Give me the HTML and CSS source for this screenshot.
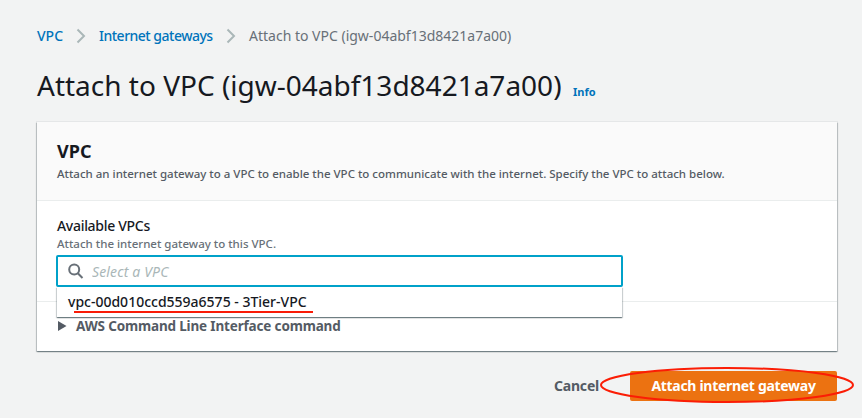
FILE: index.html
```html
<!DOCTYPE html>
<html lang="en">
<head>
  <meta charset="UTF-8">
  <meta name="viewport" content="width=device-width, initial-scale=1.0">
  <title>Attach to VPC</title>
  <link rel="stylesheet" href="styles.css">
</head>
<body>

  <nav class="breadcrumb">
    <a href="#" class="crumb-vpc">VPC</a>
    <svg class="chevron" width="10" height="16" viewBox="0 0 10 16"><path d="M1.5 1.5L8 8l-6.5 6.5"/></svg>
    <a href="#" class="crumb-gateways">Internet gateways</a>
    <svg class="chevron" width="10" height="16" viewBox="0 0 10 16"><path d="M1.5 1.5L8 8l-6.5 6.5"/></svg>
    <span class="crumb-current">Attach to VPC (igw-04abf13d8421a7a00)</span>
  </nav>

  <div class="page-title">
    <h1>Attach to VPC (igw-04abf13d8421a7a00)</h1>
    <a href="#" class="info">Info</a>
  </div>

  <div class="card">
    <div class="card-header">
      <h2>VPC</h2>
      <p>Attach an internet gateway to a VPC to enable the VPC to communicate with the internet. Specify the VPC to attach below.</p>
    </div>

    <div class="card-body">
      <label for="vpc">Available VPCs</label>
      <p class="hint">Attach the internet gateway to this VPC.</p>
      <div class="select">
        <div class="search-box">
          <svg class="search-icon" width="16" height="16" viewBox="0 0 16 16"><circle cx="6.2" cy="6.5" r="5"/><path d="M9.8 10.2L14.5 15"/></svg>
          <input type="text" id="vpc" placeholder="Select a VPC">
        </div>
        <div class="dropdown">
          <span class="option">vpc-00d010ccd559a6575 - 3Tier-VPC</span>
          <span class="underline"></span>
        </div>
      </div>
    </div>

    <div class="cli">
      <svg width="9" height="10" viewBox="0 0 9 10"><path d="M0 0l8.5 5L0 10z"/></svg>
      <span class="cli-text">AWS Command Line Interface command</span>
    </div>
  </div>

  <div class="actions">
    <button type="button" class="cancel-btn">Cancel</button>
    <button type="submit" class="attach-btn">
      <span class="attach-text">Attach internet gateway</span>
      <svg class="highlight" width="258" height="38" viewBox="0 0 258 38"><ellipse cx="129" cy="19" rx="126" ry="17"/></svg>
    </button>
  </div>

</body>
</html>
```
FILE: styles.css
```css
* {
  box-sizing: border-box;
}

body {
  font-family: "Noto Sans", "Open Sans", sans-serif;
  font-size: 14px;
  background: #f2f3f3;
  color: #16191f;
  margin: 0;
  padding: 24px 25px 0 37px;
  height: 418px;
  overflow: hidden;
}

h1, h2, p {
  margin: 0;
}

a {
  color: #0073bb;
  text-decoration: none;
}

.breadcrumb {
  display: flex;
  align-items: center;
  height: 23px;
  color: #687078;
  white-space: nowrap;
}

.crumb-vpc {
  width: 26px;
  font-weight: 500;
}

.crumb-gateways {
  width: 114px;
  font-weight: 500;
  letter-spacing: -0.5px;
}

.chevron {
  margin: 0 13px;
  fill: none;
  stroke: #aab7b8;
  stroke-width: 2;
}

.page-title {
  display: flex;
  align-items: baseline;
  height: 75px;
  padding-top: 19px;
  white-space: nowrap;
}

h1 {
  width: 536px;
  font-size: 28px;
  font-weight: 400;
  line-height: 38px;
}

.info {
  font-size: 11px;
  font-weight: 700;
}

.card {
  width: 800px;
  height: 229px;
  background: #fff;
  box-shadow: 0 1px 1px 0 rgba(0, 28, 36, 0.3), 1px 1px 1px 0 rgba(0, 28, 36, 0.15), -1px 1px 1px 0 rgba(0, 28, 36, 0.15), 0 0 0 1px rgba(0, 28, 36, 0.05);
}

.card-header {
  height: 79px;
  padding: 16px 20px 0;
  background: #fafafa;
  border-bottom: 1px solid #eaeded;
}

h2 {
  font-size: 18px;
  font-weight: 700;
  line-height: 27px;
}

.card-header p {
  font-size: 11.5px;
  font-weight: 500;
  line-height: 18px;
  color: #545b64;
  white-space: nowrap;
}

.card-body {
  height: 101px;
  padding: 15px 20px 0;
  border-bottom: 1px solid #eaeded;
}

label {
  display: block;
  line-height: 20px;
  font-weight: 500;
  letter-spacing: -0.3px;
}

.hint {
  font-size: 11.5px;
  font-weight: 500;
  line-height: 16px;
  color: #687078;
}

.select {
  position: relative;
  width: 567px;
  margin: 3px 0 0 -1px;
}

.search-box {
  display: flex;
  align-items: center;
  height: 32px;
  padding: 0 10px;
  background: #fff;
  border: 2px solid #00a1c9;
  border-radius: 2px;
}

.search-icon {
  fill: none;
  stroke: #687078;
  stroke-width: 2;
}

.search-box input {
  flex: 1;
  padding: 0 0 0 8px;
  border: none;
  outline: none;
  background: none;
  font: inherit;
}

.search-box input::placeholder {
  color: #aab7b8;
  font-style: italic;
  letter-spacing: 0.15px;
}

.dropdown {
  position: absolute;
  top: 32px;
  left: 1px;
  width: 565px;
  height: 30px;
  padding: 5px 11px;
  background: #fff;
  line-height: 20px;
  white-space: nowrap;
  box-shadow: 0 1px 1px 0 rgba(0, 28, 36, 0.4), 1px 1px 1px 0 rgba(0, 28, 36, 0.15), -1px 1px 1px 0 rgba(0, 28, 36, 0.15);
}

.option {
  font-weight: 500;
}

.underline {
  position: absolute;
  top: 24px;
  left: 17px;
  width: 239px;
  height: 2px;
  background: #f91c08;
}

.cli {
  display: flex;
  align-items: center;
  height: 48px;
  padding: 0 21px;
  gap: 9px;
  color: #545b64;
  font-weight: 700;
  fill: #545b64;
}

.cli-text {
  font-size: 13.5px;
  letter-spacing: -0.16px;
  padding-bottom: 1px;
}

.actions {
  display: flex;
  width: 800px;
  margin-top: 20px;
  justify-content: flex-end;
}

button {
  height: 30px;
  padding: 0 0 1px;
  border: none;
  font: inherit;
  font-weight: 700;
  white-space: nowrap;
}

.cancel-btn {
  width: 45px;
  margin-right: 31px;
  background: none;
  color: #545b64;
  letter-spacing: -0.2px;
}

.attach-btn {
  position: relative;
  width: 207px;
  background: #ec7211;
  color: #fff;
  border-radius: 2px;
  letter-spacing: -0.3px;
}

/* red ring drawn around the main button */
.highlight {
  position: absolute;
  top: -5px;
  left: -32px;
  fill: none;
  stroke: #fb1d05;
  stroke-width: 2;
}
```
